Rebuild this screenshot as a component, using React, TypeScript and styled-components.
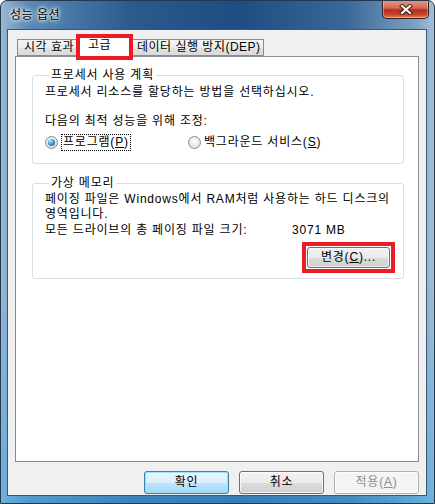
import React from "react";
import styled, { createGlobalStyle } from "styled-components";

const FONT = `"Liberation Sans", "Noto Sans CJK KR", sans-serif`;

const GlobalStyle = createGlobalStyle`
  html, body {
    margin: 0;
    padding: 0;
    background: #ffffff;
  }
  body {
    font-family: ${FONT};
    font-size: 12px;
    letter-spacing: 0.8px;
    color: #000;
  }
`;

const Window = styled.div`
  width: 435px;
  height: 504px;
  box-sizing: border-box;
  display: flex;
  flex-direction: column;
  border: 1px solid #24384e;
  border-radius: 7px 7px 0 0;
  background:
    linear-gradient(180deg, rgba(0, 0, 0, 0) 55%, rgba(70, 170, 225, 0.55) 100%),
    linear-gradient(90deg, #9ab8d5 0%, #5d8bb7 6%, #2b5a8d 30%, #1f4c82 55%, #3a6898 80%, #7fa2c4 96%, #a3bfd9 100%);
  overflow: hidden;
`;

const TitleBar = styled.div`
  height: 28px;
  flex-shrink: 0;
  display: flex;
  align-items: flex-start;
  justify-content: space-between;
  padding-left: 9px;
  padding-right: 5px;
`;

const Title = styled.div`
  margin-top: 7px;
  font-size: 12px;
  line-height: 15px;
  color: #000;
  letter-spacing: 0.5px;
  text-shadow: 0 0 6px #ffffff, 0 0 4px #ffffff, 0 0 2px #ffffff;
`;

const CloseButton = styled.div`
  width: 47px;
  height: 19px;
  margin-top: -1px;
  box-sizing: border-box;
  border: 1px solid #3b1e1a;
  border-top: none;
  border-radius: 0 0 5px 5px;
  background: linear-gradient(180deg, #e6998a 0%, #d06a55 45%, #b52d18 55%, #c6432a 80%, #dd8458 100%);
  box-shadow: inset 0 0 0 1px rgba(255, 255, 255, 0.35);
  display: flex;
  align-items: center;
  justify-content: center;
`;

const Client = styled.div`
  flex: 1;
  margin: 0 7px 7px 6px;
  background: #f0f0f0;
  border: 1px solid #3f5670;
  display: flex;
  flex-direction: column;
  padding: 7px 7px 1px 7px;
  min-height: 0;
`;

const TabStrip = styled.div`
  height: 19px;
  display: flex;
  align-items: flex-end;
  padding-left: 2px;
  position: relative;
  z-index: 2;
`;

const Tab = styled.div<{ $w: number; $active?: boolean }>`
  position: relative;
  box-sizing: border-box;
  width: ${({ $w, $active }) => ($active ? $w + 4 : $w)}px;
  height: ${({ $active }) => ($active ? 20 : 17)}px;
  margin: ${({ $active }) => ($active ? "0 -2px -1px -2px" : "0")};
  padding-left: ${({ $active }) => ($active ? 11 : 6)}px;
  border: 1px solid #898c95;
  border-bottom: ${({ $active }) => ($active ? "none" : "1px solid #898c95")};
  background: ${({ $active }) =>
    $active ? "#ffffff" : "linear-gradient(180deg, #f4f4f4 0%, #ececec 50%, #e2e2e2 51%, #dadada 100%)"};
  z-index: ${({ $active }) => ($active ? 3 : 1)};
  font-size: 12px;
  line-height: 15px;
  letter-spacing: 0.5px;
  white-space: nowrap;
  & + & {
    border-left: ${({ $active }) => ($active ? "1px solid #898c95" : "none")};
  }
`;

const Highlight = styled.div`
  position: absolute;
  top: -4px;
  left: -1px;
  right: -1px;
  bottom: -3px;
  border: 4px solid #ed1c24;
  pointer-events: none;
`;

const Panel = styled.div`
  flex: 1;
  background: #ffffff;
  border: 1px solid #898c95;
  padding: 11px 14px 0 16px;
  display: flex;
  flex-direction: column;
  gap: 12px;
`;

const Group = styled.fieldset<{ $pt?: number; $pb?: number }>`
  margin: 0;
  padding: ${({ $pt }) => $pt ?? 2}px 12px ${({ $pb }) => $pb ?? 10}px 12px;
  border: 1px solid #d5dfe5;
  border-radius: 3px;
  min-width: 0;
`;

const Legend = styled.legend`
  margin-left: 4px;
  padding: 0 2px;
  font-size: 12px;
  line-height: 15px;
`;

const Line = styled.div<{ $gap?: number }>`
  font-size: 12px;
  line-height: 15px;
  margin-top: ${({ $gap }) => $gap ?? 0}px;
  white-space: nowrap;
`;

const RadioRow = styled.div`
  display: grid;
  grid-template-columns: 143px auto;
  margin-top: 5px;
  height: 17px;
  align-items: center;
`;

const RadioOption = styled.label`
  display: flex;
  align-items: center;
  gap: 2px;
  font-size: 12px;
  line-height: 15px;
`;

const RadioDot = styled.span<{ $checked?: boolean }>`
  width: 13px;
  height: 13px;
  box-sizing: border-box;
  border-radius: 50%;
  border: 1px solid #8a8e93;
  background: radial-gradient(circle at 50% 40%, #ffffff 0%, #ececec 45%, #cfd1d3 100%);
  display: flex;
  align-items: center;
  justify-content: center;
  &::after {
    content: "";
    display: ${({ $checked }) => ($checked ? "block" : "none")};
    width: 7px;
    height: 7px;
    border-radius: 50%;
    background: radial-gradient(circle at 35% 30%, #b9ecff 0%, #3aa0dc 45%, #10508a 100%);
  }
`;

const RadioLabel = styled.span<{ $focused?: boolean }>`
  padding: 0 1px;
  margin-left: ${({ $focused }) => ($focused ? 2 : 0)}px;
  outline: ${({ $focused }) => ($focused ? "1px dotted #000" : "none")};
  outline-offset: 0;
`;

const Key = styled.span`
  text-decoration: underline;
  text-underline-offset: 1px;
`;

const SizeRow = styled.div`
  display: grid;
  grid-template-columns: 247px auto;
  font-size: 12px;
  line-height: 15px;
  margin-top: 1px;
`;

const GroupActions = styled.div`
  display: flex;
  justify-content: flex-end;
  margin-top: 9px;
  padding-right: 1px;
`;

const ButtonWrap = styled.div`
  position: relative;
`;

const Button = styled.button<{ $default?: boolean; $disabled?: boolean }>`
  width: 85px;
  height: 23px;
  box-sizing: border-box;
  padding: 0;
  border-radius: 3px;
  font-family: ${FONT};
  font-size: 12px;
  line-height: 15px;
  letter-spacing: 0.8px;
  color: ${({ $disabled }) => ($disabled ? "#8d8d8d" : "#000")};
  border: 1px solid
    ${({ $default, $disabled }) => ($disabled ? "#adb2b5" : $default ? "#3c7fb1" : "#707070")};
  background: ${({ $default, $disabled }) =>
    $disabled
      ? "#f4f4f4"
      : $default
      ? "linear-gradient(180deg, #eaf6fd 0%, #d9f0fc 50%, #bee6fd 51%, #a7d9f5 100%)"
      : "linear-gradient(180deg, #f2f2f2 0%, #ebebeb 50%, #dddddd 51%, #cfcfcf 100%)"};
  box-shadow: ${({ $default }) =>
    $default ? "inset 0 0 0 1px #9ee0fb" : "inset 0 0 0 1px rgba(255,255,255,0.7)"};
`;

const SmallButton = styled(Button)`
  width: 83px;
  height: 21px;
`;

const ButtonRow = styled.div`
  display: flex;
  justify-content: flex-end;
  gap: 10px;
  margin-top: 9px;
  height: 23px;
`;

function CloseIcon() {
  return (
    <svg width="14" height="11" viewBox="0 0 14 11">
      <path d="M3 2 L11 9 M11 2 L3 9" stroke="#3a1a14" strokeWidth="4" strokeLinecap="square" />
      <path d="M3 2 L11 9 M11 2 L3 9" stroke="#ffffff" strokeWidth="2.2" strokeLinecap="square" />
    </svg>
  );
}

export default function App() {
  return (
    <>
      <GlobalStyle />
      <Window>
        <TitleBar>
          <Title>성능 옵션</Title>
          <CloseButton>
            <CloseIcon />
          </CloseButton>
        </TitleBar>
        <Client>
          <TabStrip>
            <Tab $w={62}>시각 효과</Tab>
            <Tab $w={52} $active>
              고급
              <Highlight />
            </Tab>
            <Tab $w={133}>데이터 실행 방지(DEP)</Tab>
          </TabStrip>
          <Panel>
            <Group $pb={12}>
              <Legend>프로세서 사용 계획</Legend>
              <Line>프로세서 리소스를 할당하는 방법을 선택하십시오.</Line>
              <Line $gap={14}>다음의 최적 성능을 위해 조정:</Line>
              <RadioRow>
                <RadioOption>
                  <RadioDot $checked />
                  <RadioLabel $focused>
                    프로그램(<Key>P</Key>)
                  </RadioLabel>
                </RadioOption>
                <RadioOption>
                  <RadioDot />
                  <RadioLabel>
                    백그라운드 서비스(<Key>S</Key>)
                  </RadioLabel>
                </RadioOption>
              </RadioRow>
            </Group>
            <Group $pt={1}>
              <Legend>가상 메모리</Legend>
              <Line>
                페이징 파일은 Windows에서 RAM처럼 사용하는 하드 디스크의
                <br />
                영역입니다.
              </Line>
              <SizeRow>
                <span>모든 드라이브의 총 페이징 파일 크기:</span>
                <span>3071 MB</span>
              </SizeRow>
              <GroupActions>
                <ButtonWrap>
                  <SmallButton>
                    변경(<Key>C</Key>)...
                  </SmallButton>
                  <Highlight style={{ top: -5, left: -5, right: -5, bottom: -5 }} />
                </ButtonWrap>
              </GroupActions>
            </Group>
          </Panel>
          <ButtonRow>
            <Button $default>확인</Button>
            <Button>취소</Button>
            <Button $disabled>
              적용(<Key>A</Key>)
            </Button>
          </ButtonRow>
        </Client>
      </Window>
    </>
  );
}
